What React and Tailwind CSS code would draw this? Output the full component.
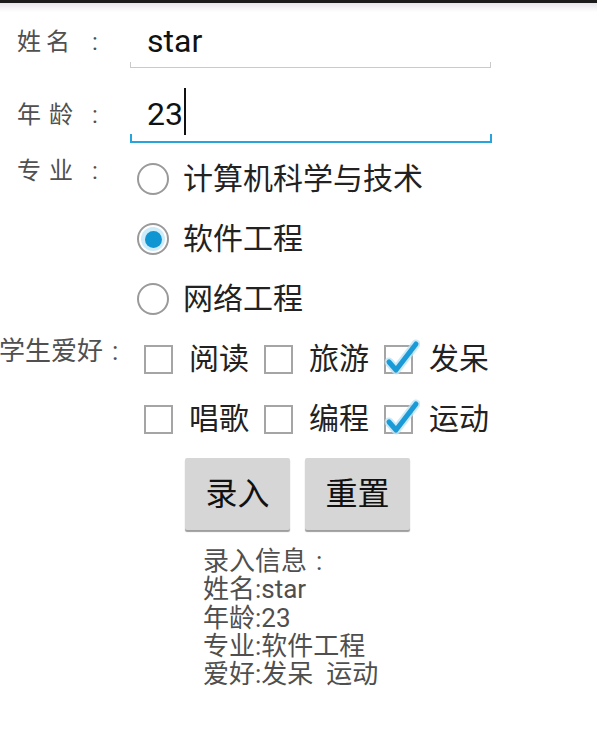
import { useState } from "react";

const majors = ["计算机科学与技术", "软件工程", "网络工程"];
const hobbyList = ["阅读", "旅游", "发呆", "唱歌", "编程", "运动"];

const Radio = ({ checked }) => (
    <span className="flex h-[32px] w-[32px] shrink-0 items-center justify-center rounded-full border-2 border-[#9a9a9a] bg-white">
        {checked && (
            <span className="flex h-[24px] w-[24px] items-center justify-center rounded-full bg-[#cdebf8]">
                <span className="h-[17px] w-[17px] rounded-full bg-[#0f96d2]" />
            </span>
        )}
    </span>
);

const CheckBox = ({ checked }) => (
    <span className="relative h-[29px] w-[29px] shrink-0 border-2 border-[#a5a5a5] bg-white">
        {checked && (
            <svg className="absolute -left-[2px] -top-[8px] h-[36px] w-[36px]" viewBox="0 0 36 36">
                <path d="M5 23 L12 31 L32 5" fill="none" stroke="#bfe4f5" strokeWidth="9" strokeLinecap="round" strokeLinejoin="round" opacity="0.8" />
                <path d="M5 23 L12 31 L32 5" fill="none" stroke="#1a9bd7" strokeWidth="5" strokeLinecap="round" strokeLinejoin="round" />
            </svg>
        )}
    </span>
);

export default function App() {
    const [major, setMajor] = useState(1);
    const [hobbies, setHobbies] = useState(["发呆", "运动"]);

    const toggle = (h) =>
        setHobbies(hobbies.includes(h) ? hobbies.filter((x) => x !== h) : [...hobbies, h]);

    return (
        <div className="min-h-[737px] w-[597px] overflow-hidden bg-white font-[Roboto,'Noto_Sans_CJK_SC',sans-serif]">
            <div className="h-[3px] bg-[#1b1b1b]" />
            <div className="h-[9px] bg-gradient-to-b from-[#e7e4eb] to-white" />

            {/* 姓名 */}
            <div className="flex h-[56px]">
                <div className="mt-[18px] flex w-[130px] shrink-0 text-[24px] leading-[24px] text-[#505050]">
                    <span className="ml-[17px]">姓</span>
                    <span className="ml-[5px]">名</span>
                    <span className="ml-[22px]">:</span>
                </div>
                <div className="mt-[10px] flex h-[46px] w-[361px] items-end border-b border-[#cacaca]">
                    <span className="h-[5px] w-px bg-[#cacaca]" />
                    <div className="flex-1 pb-[7px] pl-[16px] text-[32px] leading-[38px] text-[#111]">star</div>
                    <span className="h-[5px] w-px bg-[#cacaca]" />
                </div>
            </div>

            {/* 年龄 */}
            <div className="flex h-[76px]">
                <div className="mt-[35px] flex w-[130px] shrink-0 text-[24px] leading-[24px] text-[#505050]">
                    <span className="ml-[17px]">年</span>
                    <span className="ml-[8px]">龄</span>
                    <span className="ml-[19px]">:</span>
                </div>
                <div className="mt-[27px] flex h-[48px] w-[362px] items-end border-b-2 border-[#27a4db]">
                    <span className="h-[7px] w-[2px] bg-[#27a4db]" />
                    <div className="flex-1 pb-[8px] pl-[15px] text-[32px] leading-[38px] text-[#111]">
                        23
                        <span className="relative -top-[5px] -my-[8px] ml-[1px] inline-block h-[47px] w-[2px] bg-[#111] align-middle" />
                    </div>
                    <span className="h-[7px] w-[2px] bg-[#27a4db]" />
                </div>
            </div>

            {/* 专业 */}
            <div className="flex">
                <div className="mt-[15px] flex w-[130px] shrink-0 self-start text-[24px] leading-[24px] text-[#505050]">
                    <span className="ml-[17px]">专</span>
                    <span className="ml-[8px]">业</span>
                    <span className="ml-[19px]">:</span>
                </div>
                <div className="mt-[5px] flex flex-col pl-[7px]">
                    {majors.map((m, i) => (
                        <div key={m} onClick={() => setMajor(i)} className="flex h-[60px] items-center gap-[14px]">
                            <Radio checked={major === i} />
                            <span className="text-[30px] leading-[36px] text-[#222]">{m}</span>
                        </div>
                    ))}
                </div>
            </div>

            {/* 学生爱好 */}
            <div className="flex">
                <div className="mt-[9px] flex w-[130px] shrink-0 self-start text-[26px] leading-[26px] text-[#505050]">
                    <span className="-ml-[1px]">学生爱好</span>
                    <span className="ml-[9px]">:</span>
                </div>
                <div className="grid grid-cols-[120px_120px_120px] pl-[14px]">
                    {hobbyList.map((h) => (
                        <div key={h} onClick={() => toggle(h)} className="flex h-[60px] items-center gap-[16px]">
                            <CheckBox checked={hobbies.includes(h)} />
                            <span className="text-[30px] leading-[36px] text-[#222]">{h}</span>
                        </div>
                    ))}
                </div>
            </div>

            <div className="mt-[9px] flex gap-[15px] pl-[185px]">
                {["录入", "重置"].map((b) => (
                    <button
                        key={b}
                        className="h-[72px] w-[105px] rounded-[2px] bg-[#d6d6d6] text-[32px] text-[#111] shadow-[0_2px_1px_#9e9e9e]"
                    >
                        {b}
                    </button>
                ))}
            </div>

            <div className="mt-[17px] pl-[203px] text-[26px] leading-[28.3px] text-[#4f4f4f]">
                <div>
                    录入信息<span className="ml-[9px]">:</span>
                </div>
                <div>姓名:star</div>
                <div>年龄:23</div>
                <div>专业:{majors[major]}</div>
                <div>爱好:{hobbyList.filter((h) => hobbies.includes(h)).join("\u00a0\u00a0")}</div>
            </div>
        </div>
    );
}
